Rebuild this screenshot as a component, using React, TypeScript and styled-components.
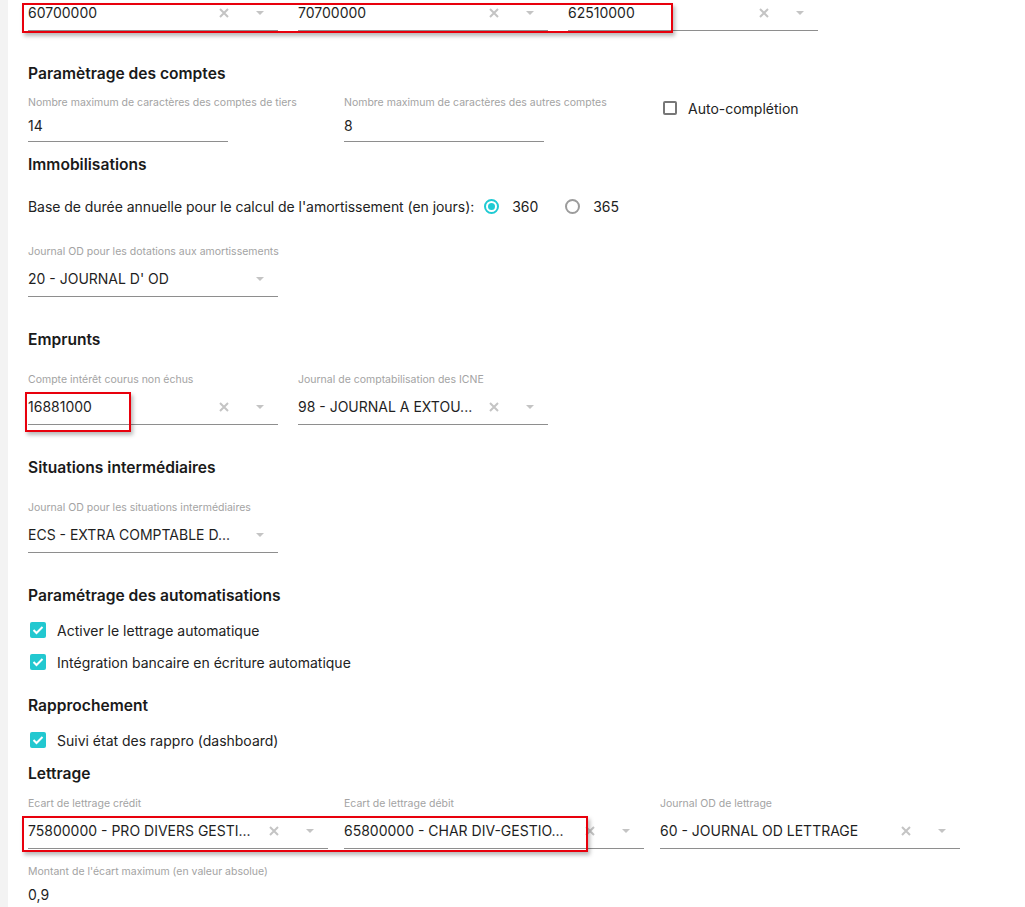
import React from "react";
import styled, { createGlobalStyle } from "styled-components";

const GlobalStyle = createGlobalStyle`
  html, body { margin: 0; padding: 0; background: #ffffff; }
  body {
    font-family: Inter, Roboto, "Liberation Sans", Arial, sans-serif;
    color: #212121;
  }
  * { box-sizing: border-box; }
`;

const Page = styled.div`
  display: flex;
  min-height: 907px;
  overflow: hidden;
`;

const Strip = styled.div`
  width: 8px;
  flex: none;
  background: #f3f3f3;
`;

const Main = styled.main`
  position: relative;
  flex: 1;
  padding-left: 20px;
`;

const Section = styled.section<{ $mt: number }>`
  margin-top: ${(p) => p.$mt}px;
`;

const Heading = styled.h2<{ $mb: number }>`
  margin: 0 0 ${(p) => p.$mb}px;
  padding-top: 1px;
  height: 20px;
  font-size: 15.6px;
  line-height: 20px;
  font-weight: 600;
  color: #1a1a1a;
`;

const Row = styled.div<{ $gap: number; $mt?: number }>`
  display: flex;
  align-items: flex-start;
  gap: ${(p) => p.$gap}px;
  margin-top: ${(p) => p.$mt ?? 0}px;
`;

const Field = styled.div<{ $w: number }>`
  width: ${(p) => p.$w}px;
  flex: none;
`;

const Label = styled.div<{ $mb: number }>`
  font-size: 10.5px;
  line-height: 14px;
  padding-top: 1px;
  height: 14px;
  color: #a3a3a3;
  margin-bottom: ${(p) => p.$mb}px;
  white-space: nowrap;
`;

const Control = styled.div<{ $h: number }>`
  display: flex;
  align-items: center;
  height: ${(p) => p.$h}px;
  padding-bottom: 4px;
  border-bottom: 1px solid #8e8e8e;
`;

const Value = styled.span`
  flex: 1;
  min-width: 0;
  font-size: 14px;
  line-height: 18px;
  color: #1f1f1f;
  white-space: nowrap;
  overflow: hidden;
`;

const ClearBox = styled.span`
  width: 20px;
  flex: none;
  display: flex;
  justify-content: center;
  margin-right: 20px;
`;

const ArrowBox = styled.span`
  width: 12px;
  flex: none;
  display: flex;
  justify-content: center;
  margin-right: 12px;
`;

const OptionRow = styled.div<{ $mt?: number }>`
  display: flex;
  align-items: center;
  height: 20px;
  margin-top: ${(p) => p.$mt ?? 0}px;
  font-size: 14px;
  letter-spacing: -0.05px;
  color: #222;
`;

const RadioOption = styled.label<{ $ml: number }>`
  display: flex;
  align-items: center;
  gap: 13px;
  margin-left: ${(p) => p.$ml}px;
`;

const RadioCircle = styled.span<{ $on?: boolean }>`
  width: 15px;
  height: 15px;
  border-radius: 50%;
  border: 2px solid ${(p) => (p.$on ? "#1fcad3" : "#9c9c9c")};
  display: flex;
  align-items: center;
  justify-content: center;
  &::after {
    content: "";
    display: ${(p) => (p.$on ? "block" : "none")};
    width: 7px;
    height: 7px;
    border-radius: 50%;
    background: #1fcad3;
  }
`;

const CheckOption = styled.label<{ $ml?: number; $mt?: number }>`
  display: flex;
  align-items: center;
  gap: 11px;
  height: 20px;
  font-size: 14px;
  color: #222;
  margin-left: ${(p) => p.$ml ?? 0}px;
  margin-top: ${(p) => p.$mt ?? 0}px;
`;

const CheckBox = styled.span<{ $on?: boolean }>`
  width: ${(p) => (p.$on ? 16 : 14)}px;
  height: ${(p) => (p.$on ? 16 : 14)}px;
  margin-left: ${(p) => (p.$on ? 2 : 0)}px;
  border-radius: 2px;
  flex: none;
  display: flex;
  align-items: center;
  justify-content: center;
  background: ${(p) => (p.$on ? "#22c8d0" : "#ffffff")};
  border: ${(p) => (p.$on ? "none" : "2px solid #777777")};
`;

const Annotation = styled.div<{ $x: number; $y: number; $w: number; $h: number }>`
  position: absolute;
  left: ${(p) => p.$x}px;
  top: ${(p) => p.$y}px;
  width: ${(p) => p.$w}px;
  height: ${(p) => p.$h}px;
  border: 2px solid #e8000c;
  box-shadow: 2px 3px 4px rgba(0, 0, 0, 0.28);
  pointer-events: none;
`;

const ClearIcon = () => (
  <svg width="10" height="10" viewBox="0 0 10 10">
    <path d="M1 1 L9 9 M9 1 L1 9" stroke="#c4c4c4" strokeWidth="2" />
  </svg>
);

const ArrowIcon = () => (
  <svg width="8" height="4" viewBox="0 0 8 4">
    <path d="M0 0 H8 L4 4 Z" fill="#c4c4c4" />
  </svg>
);

const CheckIcon = () => (
  <svg width="12" height="10" viewBox="0 0 12 10">
    <path d="M1.5 5 L4.5 8 L10.5 2" stroke="#ffffff" strokeWidth="2" fill="none" />
  </svg>
);

type SelectProps = { w: number; label?: string; value: string; clear?: boolean };

const SelectField = ({ w, label, value, clear = true }: SelectProps) => (
  <Field $w={w}>
    {label && <Label $mb={8}>{label}</Label>}
    <Control $h={31}>
      <Value>{value}</Value>
      {clear && (
        <ClearBox>
          <ClearIcon />
        </ClearBox>
      )}
      <ArrowBox>
        <ArrowIcon />
      </ArrowBox>
    </Control>
  </Field>
);

const TextField = ({ w, label, value }: { w: number; label: string; value: string }) => (
  <Field $w={w}>
    <Label $mb={6}>{label}</Label>
    <Control $h={27}>
      <Value>{value}</Value>
    </Control>
  </Field>
);

const Check = ({ label, mt }: { label: string; mt?: number }) => (
  <CheckOption $mt={mt}>
    <CheckBox $on>
      <CheckIcon />
    </CheckBox>
    {label}
  </CheckOption>
);

export default function App() {
  return (
    <>
      <GlobalStyle />
      <Page>
        <Strip />
        <Main>
          <Row $gap={20}>
            <SelectField w={250} value="60700000" />
            <SelectField w={250} value="70700000" />
            <SelectField w={250} value="62510000" />
          </Row>

          <Section $mt={32}>
            <Heading $mb={12}>Paramètrage des comptes</Heading>
            <Row $gap={116}>
              <TextField w={200} label="Nombre maximum de caractères des comptes de tiers" value="14" />
              <TextField w={200} label="Nombre maximum de caractères des autres comptes" value="8" />
              <CheckOption $ml={3} $mt={3}>
                <CheckBox />
                Auto-complétion
              </CheckOption>
            </Row>
          </Section>

          <Section $mt={12}>
            <Heading $mb={22}>Immobilisations</Heading>
            <OptionRow>
              Base de durée annuelle pour le calcul de l'amortissement (en jours):
              <RadioOption $ml={10}>
                <RadioCircle $on />
                360
              </RadioOption>
              <RadioOption $ml={27}>
                <RadioCircle />
                365
              </RadioOption>
            </OptionRow>
            <Row $gap={20} $mt={28}>
              <SelectField
                w={250}
                label="Journal OD pour les dotations aux amortissements"
                value="20 - JOURNAL D' OD"
                clear={false}
              />
            </Row>
          </Section>

          <Section $mt={32}>
            <Heading $mb={23}>Emprunts</Heading>
            <Row $gap={20}>
              <SelectField w={250} label="Compte intérêt courus non échus" value="16881000" />
              <SelectField w={250} label="Journal de comptabilisation des ICNE" value="98 - JOURNAL A EXTOU..." />
            </Row>
          </Section>

          <Section $mt={32}>
            <Heading $mb={23}>Situations intermédiaires</Heading>
            <Row $gap={20}>
              <SelectField
                w={250}
                label="Journal OD pour les situations intermédiaires"
                value="ECS - EXTRA COMPTABLE D..."
                clear={false}
              />
            </Row>
          </Section>

          <Section $mt={32}>
            <Heading $mb={15}>Paramétrage des automatisations</Heading>
            <Check label="Activer le lettrage automatique" />
            <Check label="Intégration bancaire en écriture automatique" mt={12} />
          </Section>

          <Section $mt={23}>
            <Heading $mb={15}>Rapprochement</Heading>
            <Check label="Suivi état des rappro (dashboard)" />
          </Section>

          <Section $mt={13}>
            <Heading $mb={13}>Lettrage</Heading>
            <Row $gap={16}>
              <SelectField w={300} label="Ecart de lettrage crédit" value="75800000 - PRO DIVERS GESTI..." />
              <SelectField w={300} label="Ecart de lettrage débit" value="65800000 - CHAR DIV-GESTIO..." />
              <SelectField w={300} label="Journal OD de lettrage" value="60 - JOURNAL OD LETTRAGE" />
            </Row>
            <Row $gap={16} $mt={15}>
              <TextField w={300} label="Montant de l'écart maximum (en valeur absolue)" value="0,9" />
            </Row>
          </Section>

          <Annotation $x={14} $y={3} $w={651} $h={30} />
          <Annotation $x={17} $y={392} $w={106} $h={40} />
          <Annotation $x={14} $y={816} $w={566} $h={36} />
        </Main>
      </Page>
    </>
  );
}
